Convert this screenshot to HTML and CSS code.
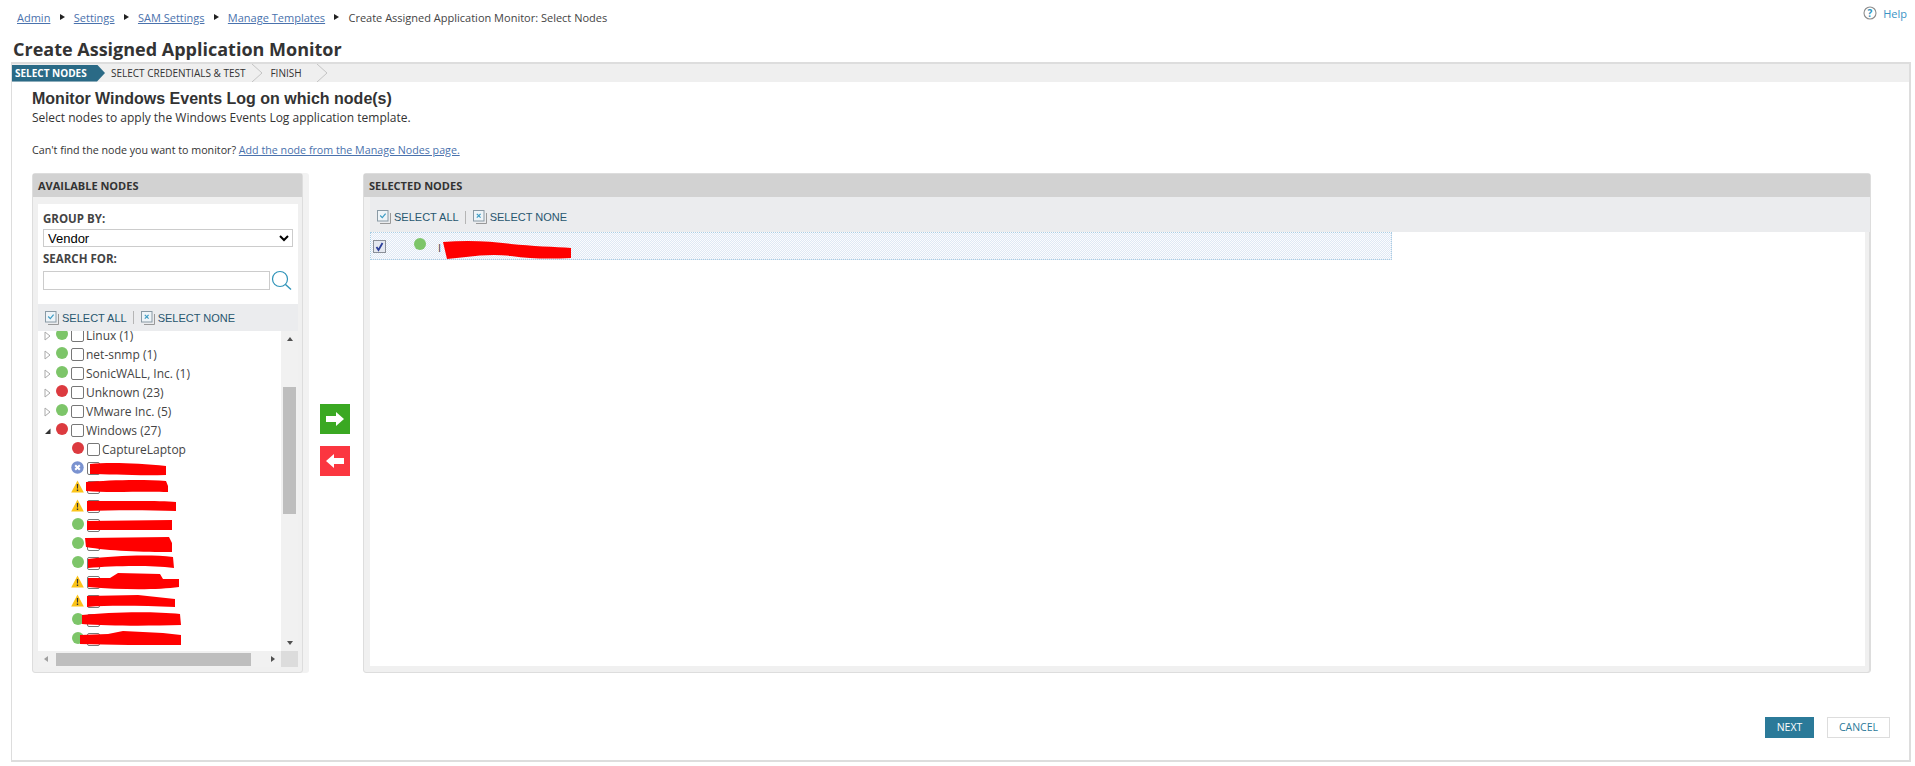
FILE: index.html
```html
<!DOCTYPE html>
<html lang="en">
<head>
    <meta charset="UTF-8">
    <title>Create Assigned Application Monitor</title>
    <link rel="stylesheet" href="styles.css">
</head>
<body>

    <svg class="defs" width="0" height="0">
        <symbol id="warn" viewBox="0 0 13 13">
            <path d="M6.5 .5 L12.8 12.5 H.2 Z" fill="#fcc419"/>
            <path d="M5.8 4 H7.2 L7 8.6 H6 Z M5.8 9.6 H7.2 V11 H5.8 Z" fill="#333"/>
        </symbol>
        <symbol id="unknown" viewBox="0 0 13 13">
            <circle cx="6.5" cy="6.5" r="6.2" fill="#7a92d0"/>
            <path d="M4.2 4.2 L8.8 8.8 M8.8 4.2 L4.2 8.8" stroke="#fff" stroke-width="2"/>
        </symbol>
        <symbol id="closed" viewBox="0 0 7 10">
            <path d="M1 1 L6 5 L1 9 Z" fill="#fff" stroke="#aaa"/>
        </symbol>
        <symbol id="all" viewBox="0 0 14 14">
            <path d="M3 13.5 H13.5 V3" fill="none" stroke="#999"/>
            <rect x=".5" y=".5" width="10.5" height="10.5" fill="#eef4f8" stroke="#8a9aa5"/>
            <path d="M3.2 5.5 L5.3 7.6 L8.6 3.6" fill="none" stroke="#3d9cc4" stroke-width="1.2"/>
        </symbol>
        <symbol id="none" viewBox="0 0 14 14">
            <path d="M3 13.5 H13.5 V3" fill="none" stroke="#999"/>
            <rect x=".5" y=".5" width="10.5" height="10.5" fill="#eef4f8" stroke="#8a9aa5"/>
            <path d="M3.8 3.8 L7.6 7.6 M7.6 3.8 L3.8 7.6" stroke="#3d9cc4" stroke-width="1.2"/>
        </symbol>
    </svg>

    <div class="topbar">
        <div class="crumbs">
            <a href="#">Admin</a><i class="sep"></i>
            <a href="#">Settings</a><i class="sep"></i>
            <a href="#">SAM Settings</a><i class="sep"></i>
            <a href="#">Manage Templates</a><i class="sep"></i>
            <span>Create Assigned Application Monitor: Select Nodes</span>
        </div>
        <a class="help" href="#">
            <svg width="14" height="14" viewBox="0 0 14 14">
                <circle cx="7" cy="7" r="6" fill="#fff" stroke="#8c8c8c" stroke-width="1.1"/>
                <text x="7" y="10.5" text-anchor="middle" class="help-mark">?</text>
            </svg>
            Help
        </a>
    </div>

    <h1 class="title">Create Assigned Application Monitor</h1>

    <div class="main">
        <div class="wizard">
            <div class="step active">SELECT NODES</div>
            <div class="step">SELECT CREDENTIALS &amp; TEST</div>
            <svg class="chev" width="13" height="18" viewBox="0 0 13 18"><path d="M1 0 L11 9 L1 18" fill="none" stroke="#c4c4c4"/></svg>
            <div class="step finish">FINISH</div>
            <svg class="chev" width="13" height="18" viewBox="0 0 13 18"><path d="M1 0 L11 9 L1 18" fill="none" stroke="#c4c4c4"/></svg>
        </div>

        <div class="content">
            <h2 class="heading">Monitor Windows Events Log on which node(s)</h2>
            <p class="sub">Select nodes to apply the Windows Events Log application template.</p>
            <p class="hint">Can't find the node you want to monitor? <a href="#">Add the node from the Manage Nodes page.</a></p>

            <div class="panels">
                <div class="panel left">
                    <div class="panel-head">AVAILABLE NODES</div>
                    <div class="left-body">
                        <div class="filters">
                            <label class="flabel">GROUP BY:</label>
                            <select class="group"><option>Vendor</option></select>
                            <label class="flabel second">SEARCH FOR:</label>
                            <div class="search">
                                <input type="text" class="search-box">
                                <svg width="21" height="21" viewBox="0 0 21 21">
                                    <circle cx="9" cy="9" r="7.5" fill="none" stroke="#2f93b8" stroke-width="1.2"/>
                                    <path d="M14.5 14.5 L20 19.5" stroke="#2f93b8" stroke-width="1.4"/>
                                </svg>
                            </div>
                        </div>
                        <div class="tools small">
                            <svg width="14" height="14"><use href="#all"/></svg><span>SELECT ALL</span><i class="bar"></i>
                            <svg width="14" height="14"><use href="#none"/></svg><span>SELECT NONE</span>
                        </div>
                        <div class="tree-wrap">
                            <div class="tree">
                                <div class="row"><svg class="exp" width="7" height="10"><use href="#closed"/></svg><i class="dot up"></i><i class="box"></i><span>Linux (1)</span></div>
                                <div class="row"><svg class="exp" width="7" height="10"><use href="#closed"/></svg><i class="dot up"></i><i class="box"></i><span>net-snmp (1)</span></div>
                                <div class="row"><svg class="exp" width="7" height="10"><use href="#closed"/></svg><i class="dot up"></i><i class="box"></i><span>SonicWALL, Inc. (1)</span></div>
                                <div class="row"><svg class="exp" width="7" height="10"><use href="#closed"/></svg><i class="dot down"></i><i class="box"></i><span>Unknown (23)</span></div>
                                <div class="row"><svg class="exp" width="7" height="10"><use href="#closed"/></svg><i class="dot up"></i><i class="box"></i><span>VMware Inc. (5)</span></div>
                                <div class="row"><svg class="exp" width="7" height="10" viewBox="0 0 7 10"><path d="M6.5 2.5 V8 H1 Z" fill="#333"/></svg><i class="dot down"></i><i class="box"></i><span>Windows (27)</span></div>
                                <div class="row child"><i class="dot down"></i><i class="box"></i><span>CaptureLaptop</span></div>
                                <div class="row child"><svg class="stat" width="13" height="13"><use href="#unknown"/></svg><i class="box"></i>
                                    <svg class="scrib" width="260" height="19"><path d="M52 5 C70 3 100 4 128 7 V16 C100 17 70 15 52 15 Z"/></svg></div>
                                <div class="row child"><svg class="stat" width="13" height="13"><use href="#warn"/></svg><i class="box"></i>
                                    <svg class="scrib" width="260" height="19"><path d="M48 4 C70 2 105 1 128 3 L130 8 V14 C105 13 70 15 48 13 Z"/></svg></div>
                                <div class="row child"><svg class="stat" width="13" height="13"><use href="#warn"/></svg><i class="box"></i>
                                    <svg class="scrib" width="260" height="19"><path d="M49 4 H100 C115 4 130 4 138 5 V14 C110 13 75 13 49 14 Z"/></svg></div>
                                <div class="row child"><i class="dot up"></i><i class="box"></i>
                                    <svg class="scrib" width="260" height="19"><path d="M49 5 L134 4 V14 L49 14 Z"/></svg></div>
                                <div class="row child"><i class="dot up"></i><i class="box"></i>
                                    <svg class="scrib" width="260" height="19"><path d="M47 3 L131 2 L134 8 V17 C105 17 70 16 48 12 Z"/></svg></div>
                                <div class="row child"><i class="dot up"></i><i class="box"></i>
                                    <svg class="scrib" width="260" height="19"><path d="M50 5 C75 2 110 0 135 3 L136 14 C110 11 75 12 50 14 Z"/></svg></div>
                                <div class="row child"><svg class="stat" width="13" height="13"><use href="#warn"/></svg><i class="box"></i>
                                    <svg class="scrib" width="260" height="19"><path d="M50 5 H72 L80 0 L122 1 L125 6 H141 V14 C120 17 85 17 50 14 Z"/></svg></div>
                                <div class="row child"><svg class="stat" width="13" height="13"><use href="#warn"/></svg><i class="box"></i>
                                    <svg class="scrib" width="260" height="19"><path d="M49 4 L100 3 L137 7 V15 C105 14 75 13 49 15 Z"/></svg></div>
                                <div class="row child"><i class="dot up"></i><i class="box"></i>
                                    <svg class="scrib" width="260" height="19"><path d="M44 4 C70 1 115 0 142 3 L143 14 C110 15 70 15 44 13 Z"/></svg></div>
                                <div class="row child"><i class="dot up"></i><i class="box"></i>
                                    <svg class="scrib" width="260" height="19"><path d="M42 5 L70 4 L85 1 L125 3 L143 5 V15 C110 15 70 15 42 14 Z"/></svg></div>
                            </div>
                            <div class="vbar">
                                <i class="arr up-arr"></i>
                                <div class="vthumb"></div>
                                <i class="arr down-arr"></i>
                            </div>
                        </div>
                        <div class="hbar">
                            <i class="arr left-arr"></i>
                            <div class="hthumb"></div>
                            <i class="arr right-arr"></i>
                            <div class="corner"></div>
                        </div>
                    </div>
                </div>

                <div class="movers">
                    <button class="move add"><svg width="18" height="14" viewBox="0 0 18 14"><path d="M0 4 H10 V0 L18 7 L10 14 V10 H0 Z" fill="#fff"/></svg></button>
                    <button class="move remove"><svg width="18" height="14" viewBox="0 0 18 14"><path d="M18 4 H8 V0 L0 7 L8 14 V10 H18 Z" fill="#fff"/></svg></button>
                </div>

                <div class="panel right">
                    <div class="panel-head">SELECTED NODES</div>
                    <div class="tools big">
                        <svg width="14" height="14"><use href="#all"/></svg><span>SELECT ALL</span><i class="bar"></i>
                        <svg width="14" height="14"><use href="#none"/></svg><span>SELECT NONE</span>
                    </div>
                    <div class="picked">
                        <div class="picked-row">
                            <svg class="tick" width="13" height="13" viewBox="0 0 13 13">
                                <rect x=".5" y=".5" width="12" height="12" fill="#e4e8f0" stroke="#8a8f98"/>
                                <path d="M3.5 7 L5.5 10 L9.5 3" fill="none" stroke="#2c3f9a" stroke-width="1.8"/>
                            </svg>
                            <i class="dot up"></i>
                            <span class="picked-name">I</span>
                            <svg class="scrib" width="220" height="28"><path d="M72 9 C95 7 120 8 140 11 C160 13 185 14 200 15 V25 C180 26 160 26 140 23 C125 21 110 22 95 24 L76 26 Z"/></svg>
                        </div>
                    </div>
                </div>
            </div>

            <div class="actions">
                <a class="btn next" href="#">NEXT</a>
                <a class="btn cancel" href="#">CANCEL</a>
            </div>
        </div>
    </div>

</body>
</html>
```

FILE: styles.css
```css
html, body {
    margin: 0;
    padding: 0;
    background-color: #fff;
    color: #333;
    font-family: "Open Sans", Arial, sans-serif;
    font-size: 11px;
}

.defs {
    position: absolute;
}

i {
    display: block;
    flex: none;
}

a {
    color: #4a72ad;
}

.topbar {
    display: flex;
    justify-content: space-between;
    height: 36px;
    padding: 0 8px 0 17px;
}

.crumbs {
    display: flex;
    align-items: center;
    height: 34px;
    color: #444;
    font-size: 11px;
}

.sep {
    width: 0;
    height: 0;
    margin: 0 9.2px;
    border-left: 5px solid #222;
    border-top: 3.5px solid transparent;
    border-bottom: 3.5px solid transparent;
}

.help {
    display: flex;
    align-items: center;
    gap: 6px;
    height: 26px;
    color: #3a93c6;
    font-size: 11px;
    text-decoration: none;
}

.help-mark {
    fill: #2f93c0;
    font-family: "Open Sans", sans-serif;
    font-size: 10px;
    font-weight: 700;
}

.title {
    height: 26px;
    margin: 0 0 0 13px;
    font-size: 18px;
    font-weight: 700;
    line-height: 26px;
    color: #333;
}

.main {
    margin: 0 4px 0 11px;
    height: 700px;
    box-sizing: border-box;
    border: 1px solid #ddd;
    border-width: 0 2px 2px 1px;
}

.wizard {
    display: flex;
    align-items: center;
    height: 18px;
    border-top: 2px solid #ddd;
    background-color: #efefef;
    color: #333;
    font-size: 10px;
    white-space: nowrap;
}

.step {
    padding-left: 7px;
    line-height: 17px;
}

.step.active {
    width: 93px;
    box-sizing: border-box;
    padding-left: 3px;
    background-color: #2a6a86;
    color: #fff;
    font-weight: 700;
    clip-path: polygon(0 0, 85px 0, 100% 50%, 85px 100%, 0 100%);
}

.step.finish {
    padding-left: 6px;
    padding-right: 8px;
}

.step + .step {
    margin-left: -1px;
}

.chev {
    margin-left: 6px;
}

.content {
    padding: 0 0 0 20px;
}

.heading {
    margin: 8px 0 0;
    font-family: "Liberation Sans", Arial, sans-serif;
    font-size: 16px;
    font-weight: 700;
    line-height: 18px;
    color: #333;
}

.sub {
    margin: 2px 0 0;
    font-size: 12px;
    line-height: 16px;
}

.hint {
    margin: 16px 0 0;
    font-size: 10.7px;
    line-height: 16px;
}

.panels {
    display: flex;
    align-items: flex-start;
    margin-top: 15px;
}

.panel {
    box-sizing: border-box;
    height: 500px;
    border: 1px solid #ddd;
    border-radius: 3px;
    background-color: #f0f0f0;
}

.panel.left {
    width: 271px;
    box-shadow: 6px 0 0 #f2f2f2;
}

.panel.right {
    display: flex;
    flex-direction: column;
    width: 1508px;
    margin-left: 13px;
    box-shadow: inset -1px 0 0 #ddd;
}

.panel-head {
    height: 23px;
    padding-left: 5px;
    background-color: #d2d2d2;
    font-size: 11px;
    font-weight: 700;
    line-height: 23px;
    color: #333;
}

.left-body {
    margin: 0 4px 0 5px;
    padding-top: 7px;
}

.filters {
    box-sizing: border-box;
    height: 100px;
    padding: 7px 5px 0;
    background-color: #fff;
}

.flabel {
    display: block;
    font-size: 11.5px;
    font-weight: 700;
    line-height: 16px;
    color: #444;
}

.flabel.second {
    margin-top: 4px;
}

.group {
    display: block;
    box-sizing: border-box;
    width: 250px;
    height: 18px;
    margin-top: 2px;
    padding: 0;
    border: 1px solid #ccc;
    border-radius: 0;
    background-color: #fff;
    font-family: "Liberation Sans", Arial, sans-serif;
    font-size: 13px;
}

.search {
    display: flex;
    align-items: center;
    margin-top: 3px;
}

.search-box {
    box-sizing: border-box;
    width: 227px;
    height: 19px;
    padding: 0;
    border: 1px solid #ccc;
}

.search svg {
    flex: none;
    margin-left: 1px;
}

.tools {
    display: flex;
    align-items: center;
    background-color: #ebecee;
    color: #27566e;
    font-family: "Liberation Sans", Arial, sans-serif;
    font-size: 11px;
}

.tools span {
    margin-left: 3px;
}

.tools.small {
    height: 27px;
    padding-left: 7px;
}

.tools.big {
    box-sizing: border-box;
    height: 35px;
    margin-left: 6px;
    padding: 5px 0 0 7px;
}

.bar {
    width: 1px;
    height: 13px;
    margin: 0 7px 0 6px;
    background-color: #b5b5b5;
}

.tree-wrap {
    display: flex;
    height: 320px;
    background-color: #fff;
}

.tree {
    flex: 1;
    overflow: hidden;
}

.row {
    position: relative;
    display: flex;
    align-items: center;
    height: 19px;
    padding-left: 6px;
    font-size: 12px;
    color: #444;
}

.row:first-child {
    margin-top: -5px;
}

.exp {
    flex: none;
    margin-right: 5px;
}

.row.child {
    padding-left: 34px;
}

.dot {
    width: 12px;
    height: 12px;
    margin-top: -3px;
    border-radius: 50%;
}

.stat {
    flex: none;
    width: 13px;
    margin-left: -1px;
    margin-top: -3px;
}

.dot.up {
    background-color: #7dc569;
}

.dot.down {
    background-color: #dc3a3f;
}

.box {
    box-sizing: border-box;
    width: 13px;
    height: 13px;
    margin: 0 2px 0 3px;
    border: 1px solid #777;
    border-radius: 2px;
    background-color: #fff;
}

.scrib {
    position: absolute;
    top: 0;
    left: 0;
    overflow: visible;
    fill: #f00;
}

.vbar {
    display: flex;
    flex-direction: column;
    align-items: center;
    width: 17px;
    background-color: #f1f1f1;
}

.vthumb {
    width: 13px;
    height: 127px;
    margin-top: 46px;
    margin-bottom: auto;
    background-color: #bebebe;
}

.arr {
    width: 0;
    height: 0;
}

.up-arr {
    margin-top: 6px;
    border-left: 3.5px solid transparent;
    border-right: 3.5px solid transparent;
    border-bottom: 4px solid #505050;
}

.down-arr {
    margin-bottom: 6px;
    border-left: 3.5px solid transparent;
    border-right: 3.5px solid transparent;
    border-top: 4px solid #505050;
}

.hbar {
    display: flex;
    align-items: center;
    height: 16px;
    background-color: #f1f1f1;
}

.left-arr {
    margin-left: 6px;
    margin-right: 8px;
    border-top: 3.5px solid transparent;
    border-bottom: 3.5px solid transparent;
    border-right: 4px solid #a0a0a0;
}

.right-arr {
    margin-left: auto;
    margin-right: 6px;
    border-top: 3.5px solid transparent;
    border-bottom: 3.5px solid transparent;
    border-left: 4px solid #505050;
}

.hthumb {
    width: 195px;
    height: 13px;
    background-color: #bebebe;
}

.corner {
    width: 17px;
    height: 16px;
    background-color: #dcdcdc;
}

.movers {
    display: flex;
    flex-direction: column;
    gap: 12px;
    margin: 231px 0 0 17px;
}

.move {
    display: flex;
    align-items: center;
    justify-content: center;
    width: 30px;
    height: 30px;
    padding: 0;
    border: none;
}

.move.add {
    background-color: #3aa822;
}

.move.remove {
    background-color: #fb3640;
}

.picked {
    flex: 1;
    margin: 0 5px 6px 6px;
    background-color: #fff;
}

.picked-row {
    position: relative;
    display: flex;
    align-items: center;
    box-sizing: border-box;
    width: 1022px;
    height: 28px;
    padding-left: 2px;
    border: 1px dotted #a9cde4;
    background: repeating-conic-gradient(#dfe8f4 0 25%, #fbfcfe 0 50%) 0 0 / 2px 2px;
}

.tick {
    flex: none;
}

.picked-row .dot {
    margin-left: 28px;
    margin-top: -4px;
}

.picked-name {
    margin-left: 12px;
    padding-top: 2px;
    font-size: 11px;
    color: #444;
}

.actions {
    display: flex;
    justify-content: flex-end;
    gap: 13px;
    margin: 44px 19px 0 0;
}

.btn {
    box-sizing: border-box;
    height: 21px;
    font-size: 10.5px;
    line-height: 21px;
    text-align: center;
    text-decoration: none;
}

.btn.next {
    width: 49px;
    background-color: #2b7a99;
    color: #fff;
}

.btn.cancel {
    width: 63px;
    border: 1px solid #ddd;
    line-height: 19px;
    color: #2b7a99;
}
```
